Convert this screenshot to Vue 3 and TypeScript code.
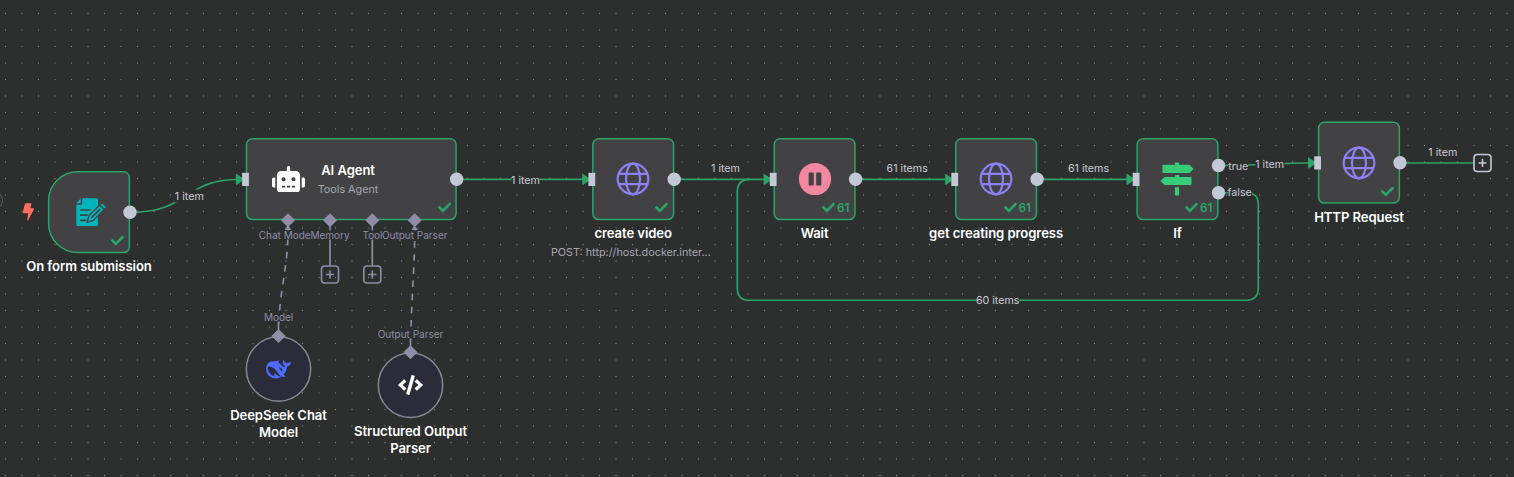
<script setup lang="ts">
type Icon = 'form' | 'robot' | 'globe' | 'pause' | 'sign' | 'whale' | 'code'

interface FlowNode {
  id: string
  x: number
  y: number
  w: number
  h: number
  kind: 'trigger' | 'agent' | 'plain' | 'round'
  icon: Icon
  name: string
  note?: string
  runs?: number
  input?: boolean
  outputs?: number[]
}

interface Label {
  text: string
  x: number
  y: number
}

const nodes: FlowNode[] = [
  { id: 'form', x: 47.8, y: 171, w: 82.4, h: 82.4, kind: 'trigger', icon: 'form', name: 'On form submission', outputs: [41.25] },
  { id: 'agent', x: 245.7, y: 138, w: 211.2, h: 82.4, kind: 'agent', icon: 'robot', name: 'AI Agent', input: true, outputs: [41.25] },
  { id: 'create', x: 592, y: 138, w: 82.4, h: 82.4, kind: 'plain', icon: 'globe', name: 'create video', note: 'POST: http://host.docker.inter...', input: true, outputs: [41.25] },
  { id: 'wait', x: 773.4, y: 138, w: 82.4, h: 82.4, kind: 'plain', icon: 'pause', name: 'Wait', runs: 61, input: true, outputs: [41.25] },
  { id: 'progress', x: 954.9, y: 138, w: 82.4, h: 82.4, kind: 'plain', icon: 'globe', name: 'get creating progress', runs: 61, input: true, outputs: [41.25] },
  { id: 'if', x: 1136.3, y: 138, w: 82.4, h: 82.4, kind: 'plain', icon: 'sign', name: 'If', runs: 61, input: true, outputs: [27.5, 54.7] },
  { id: 'http', x: 1317.8, y: 121.5, w: 82.4, h: 82.4, kind: 'plain', icon: 'globe', name: 'HTTP Request', input: true, outputs: [41.25] },
  { id: 'deepseek', x: 245.5, y: 336, w: 66, h: 66, kind: 'round', icon: 'whale', name: 'DeepSeek Chat Model' },
  { id: 'parser', x: 377.5, y: 352.3, w: 66, h: 66, kind: 'round', icon: 'code', name: 'Structured Output Parser' },
]

const edges: string[] = [
  'M130 212.3 C190 212.3 184 179.5 238 179.5',
  'M457 179.4 H586',
  'M674 179.4 H768',
  'M856 179.4 H950',
  'M1037 179.4 H1131',
  'M1219 165.6 C1262 165.6 1272 163 1312 163',
  'M1219 192.7 H1246 Q1258.3 192.7 1258.3 204 V288 Q1258.3 300.2 1246 300.2 H749 Q737.3 300.2 737.3 288 V192 Q737.3 179.4 750 179.4',
  'M1400 163 H1474',
]

const subEdges: string[] = [
  'M278.5 337 C278.5 290 288 272 288 229',
  'M410.5 353 C410.5 310 414.7 272 414.7 229',
]

const edgeLabels: Label[] = [
  { text: '1 item', x: 189.3, y: 196.2 },
  { text: '1 item', x: 525.5, y: 179.6 },
  { text: '1 item', x: 725.5, y: 168.3 },
  { text: '61 items', x: 907.2, y: 168.3 },
  { text: '61 items', x: 1088.5, y: 168.3 },
  { text: '1 item', x: 1269.7, y: 164.3 },
  { text: '60 items', x: 997.7, y: 300.3 },
  { text: '1 item', x: 1442.8, y: 152.3 },
]

const portLabels: Label[] = [
  { text: 'Chat Model', x: 285.9, y: 235 },
  { text: 'Memory', x: 330, y: 235 },
  { text: 'Tool', x: 372.5, y: 235 },
  { text: 'Output Parser', x: 414.7, y: 235 },
  { text: 'Model', x: 278.6, y: 317 },
  { text: 'Output Parser', x: 410.5, y: 334 },
]

const diamonds = [[288, 220.3], [330, 220.3], [372.3, 220.3], [414.7, 220.3], [278.5, 336], [410.5, 352.3]]

const place = (p: { x: number; y: number }) => ({ left: `${p.x}px`, top: `${p.y}px` })
const box = (n: FlowNode) => ({ left: `${n.x}px`, top: `${n.y}px`, width: `${n.w}px`, height: `${n.h}px` })

// Outline of a node, inset by half of the stroke; the left corners may be wider than the right ones.
const frame = (n: FlowNode): string => {
  const inset = 0.82
  const right = n.kind === 'round' ? 32.18 : 5.8
  const left = n.kind === 'trigger' ? 29 : right
  const x0 = n.x + inset
  const y0 = n.y + inset
  const x1 = n.x + n.w - inset
  const y1 = n.y + n.h - inset
  return `M${x0 + left} ${y0}H${x1 - right}A${right} ${right} 0 0 1 ${x1} ${y0 + right}V${y1 - right}A${right} ${right} 0 0 1 ${x1 - right} ${y1}H${x0 + left}A${left} ${left} 0 0 1 ${x0} ${y1 - left}V${y0 + left}A${left} ${left} 0 0 1 ${x0 + left} ${y0}Z`
}
</script>

<template>
  <main class="canvas">
    <svg class="layer" width="1514" height="477" viewBox="0 0 1514 477">
      <defs>
        <pattern id="dots" width="16.5" height="16.5" patternUnits="userSpaceOnUse" x="-2.75" y="5.25">
          <circle cx="8.25" cy="8.25" r="0.62" fill="#858786" />
        </pattern>
      </defs>
      <rect width="1514" height="477" fill="url(#dots)" />
      <circle cx="-6.5" cy="200.5" r="9" fill="none" stroke="#5c5e5e" />
      <path v-for="d in edges" :key="d" :d="d" class="edge" />
      <path v-for="d in subEdges" :key="d" :d="d" class="sub-edge" />
      <path d="M284.8 230 L288 225 L291.2 230Z M411.5 230 L414.7 225 L417.9 230Z" fill="#8f8da8" />
      <path d="M330 221V266 M372.3 221V266 M278.5 322V336 M410.5 338V352" class="stem" />
      <path v-for="n in nodes" :key="n.id" :d="frame(n)" class="frame" :class="{ sub: n.kind === 'round' }" />
    </svg>

    <span v-for="l in portLabels" :key="l.text + l.x" class="label port" :style="place(l)">{{ l.text }}</span>
    <span v-for="l in edgeLabels" :key="l.text + l.x" class="label" :style="place(l)">{{ l.text }}</span>
    <span class="label" :style="place({ x: 1238.3, y: 165.6 })">true</span>
    <span class="label" :style="place({ x: 1239.7, y: 192.4 })">false</span>

    <section v-for="n in nodes" :key="n.id" class="node" :class="n.kind" :style="box(n)">
      <svg v-if="n.icon === 'form'" class="icon form" width="34" height="34" viewBox="0 0 34 34">
        <path d="M8.2 3.2H22.5Q24 3.2 24 4.7V29.5Q24 31 22.5 31H3.8Q2.3 31 2.3 29.5V9.8H7Q8.2 9.8 8.2 8.6Z M6.7 3.4V8.3H2.3Z" fill="#00b4bc" />
        <path d="M6.8 15H16 M6.8 20.2H13 M6.8 25.4H12" class="form-line" />
        <path d="M14 26.4 15.5 20.9 25.7 10.9 29.4 14.5 19.3 24.6Z" fill="#00b4bc" stroke="#424244" stroke-width="2.6" />
        <path d="M14 26.4 15.5 20.9 25.7 10.9 29.4 14.5 19.3 24.6Z M26.7 9.8 28.2 8.4 31.9 12.1 30.5 13.5Z" fill="#00b4bc" />
        <path d="M17.3 22.9 26.2 14.1" stroke="#424244" stroke-width="1.6" />
      </svg>
      <svg v-else-if="n.icon === 'robot'" class="icon" width="33" height="26.4" viewBox="0 0 640 512" fill="#fff">
        <path d="M32,224H64V416H32A32,32,0,0,1,0,384V256A32,32,0,0,1,32,224Zm512-48V448a64,64,0,0,1-64,64H160a64,64,0,0,1-64-64V176a80,80,0,0,1,80-80H288V32a32,32,0,0,1,64,0V96H464A80,80,0,0,1,544,176ZM264,256a40,40,0,1,0-40,40A40,40,0,0,0,264,256Zm-8,128H192v32h64Zm96,0H288v32h64ZM456,256a40,40,0,1,0-40,40A40,40,0,0,0,456,256Zm-8,128H384v32h64ZM640,256V384a32,32,0,0,1-32,32H576V224h32A32,32,0,0,1,640,256Z" />
      </svg>
      <svg v-else-if="n.icon === 'globe'" class="icon" width="34" height="34" viewBox="-17 -17 34 34" fill="none" stroke="#8b80f6" stroke-width="2.2">
        <circle r="15.3" />
        <ellipse rx="7" ry="15.3" />
        <path d="M-14.5 -5.2H14.5 M-14.5 5.2H14.5" />
      </svg>
      <svg v-else-if="n.icon === 'pause'" class="icon" width="34" height="34" viewBox="-17 -17 34 34">
        <circle r="16.1" fill="#f2879f" />
        <rect x="-6.4" y="-6.5" width="5.2" height="13" rx="1" fill="#424244" />
        <rect x="1.2" y="-6.5" width="5.2" height="13" rx="1" fill="#424244" />
      </svg>
      <svg v-else-if="n.icon === 'sign'" class="icon" width="34" height="34" viewBox="-17 -17 34 34" fill="#37cc77">
        <path d="M-13.5 -14.2H-2.1V-15.5Q-2.1 -16.5 -1.1 -16.5H1.1Q2.1 -16.5 2.1 -15.5V-14.2H12.5L16.6 -10.1 12.5 -6.1H-13.5Q-14.5 -6.1 -14.5 -7.1V-13.2Q-14.5 -14.2 -13.5 -14.2Z" />
        <path d="M-12.5 -2H-2.1V-4.1H2.1V-2H13.5Q14.5 -2 14.5 -1V5.1Q14.5 6.1 13.5 6.1H-12.5L-16.6 2Z" />
        <path d="M-2.1 8.3H2.1V15.4Q2.1 16.4 1.1 16.4H-1.1Q-2.1 16.4 -2.1 15.4Z" />
      </svg>
      <svg v-else-if="n.icon === 'whale'" class="icon" width="25" height="25" viewBox="0 0 24 24" fill="#4d6bfe">
        <path d="M23.748 4.482c-.254-.124-.364.113-.512.234-.051.039-.094.09-.137.136-.372.397-.806.657-1.373.626-.829-.046-1.537.214-2.163.848-.133-.782-.575-1.248-1.247-1.548-.352-.156-.708-.311-.955-.65-.172-.241-.219-.51-.305-.774-.055-.16-.11-.323-.293-.35-.2-.031-.278.136-.356.276-.313.572-.434 1.202-.422 1.84.027 1.436.633 2.58 1.838 3.393.137.093.172.187.129.323-.082.28-.18.552-.266.833-.055.179-.137.217-.329.14a5.526 5.526 0 01-1.736-1.18c-.857-.828-1.631-1.742-2.597-2.458a11.365 11.365 0 00-.689-.471c-.985-.957.13-1.743.388-1.836.27-.098.093-.432-.779-.428-.872.004-1.67.295-2.687.684a3.055 3.055 0 01-.465.137 9.597 9.597 0 00-2.883-.102c-1.885.21-3.39 1.102-4.497 2.623C.082 8.606-.231 10.684.152 12.85c.403 2.284 1.569 4.175 3.36 5.653 1.858 1.533 3.997 2.284 6.438 2.14 1.482-.085 3.133-.284 4.994-1.86.47.234.962.327 1.78.397.63.059 1.236-.03 1.705-.128.735-.156.684-.837.419-.961-2.155-1.004-1.682-.595-2.113-.926 1.096-1.296 2.746-2.642 3.392-7.003.05-.347.007-.565 0-.845-.004-.17.035-.237.23-.256a4.173 4.173 0 001.545-.475c1.396-.763 1.96-2.015 2.093-3.517.02-.23-.004-.467-.247-.588zM11.581 18c-2.089-1.642-3.102-2.183-3.52-2.16-.392.024-.321.471-.235.763.09.288.207.486.371.739.114.167.192.416-.113.603-.673.416-1.842-.14-1.897-.167-1.361-.802-2.5-1.86-3.301-3.307-.774-1.393-1.224-2.887-1.298-4.482-.02-.386.093-.522.477-.592a4.696 4.696 0 011.529-.039c2.132.312 3.946 1.265 5.468 2.774.868.86 1.525 1.887 2.202 2.891.72 1.066 1.494 2.082 2.48 2.914.348.292.625.514.891.677-.802.09-2.14.11-3.054-.614zm1-6.44a.306.306 0 01.415-.287.302.302 0 01.2.288.306.306 0 01-.31.307.303.303 0 01-.304-.308zm3.11 1.596c-.2.081-.399.151-.59.16a1.245 1.245 0 01-.798-.254c-.274-.23-.47-.358-.552-.758a1.73 1.73 0 01.016-.588c.07-.327-.008-.537-.239-.727-.187-.156-.426-.199-.688-.199a.559.559 0 01-.254-.078c-.11-.054-.2-.19-.114-.358.028-.054.16-.186.192-.21.356-.202.767-.136 1.146.016.352.144.618.408 1.001.782.391.451.462.576.685.914.176.265.336.537.445.848.067.195-.019.354-.25.452z" />
      </svg>
      <svg v-else class="icon" width="25" height="20" viewBox="0 0 640 512" fill="#fff">
        <path d="M278.9 511.5l-61-17.7c-6.4-1.8-10-8.5-8.2-14.9L346.2 8.7c1.8-6.4 8.5-10 14.9-8.2l61 17.7c6.4 1.8 10 8.5 8.2 14.9L293.8 503.3c-1.9 6.4-8.5 10.1-14.9 8.2zm-114-112.2l43.5-46.4c4.6-4.9 4.3-12.7-.8-17.2L117 256l90.6-79.7c5.1-4.5 5.5-12.3.8-17.2l-43.5-46.4c-4.5-4.8-12.1-5.1-17-.5L3.8 247.2c-5.1 4.7-5.1 12.8 0 17.5l144.1 135.1c4.9 4.6 12.5 4.4 17-.5zm327.2.6l144.1-135.1c5.1-4.7 5.1-12.8 0-17.5L492.1 112.1c-4.8-4.5-12.4-4.3-17 .5L431.6 159c-4.6 4.9-4.3 12.7.8 17.2L523 256l-90.6 79.7c-5.1 4.5-5.5 12.3-.8 17.2l43.5 46.4c4.5 4.9 12.1 5.1 17 .6z" />
      </svg>

      <div v-if="n.kind === 'agent'" class="inner">
        <strong>{{ n.name }}</strong>
        <small>Tools Agent</small>
      </div>
      <div v-else class="caption">
        <strong>{{ n.name }}</strong>
        <small v-if="n.note" class="note">{{ n.note }}</small>
      </div>

      <div v-if="n.kind !== 'round'" class="status">
        <svg width="13" height="13" viewBox="0 0 512 512" fill="currentColor">
          <path d="M173.9 439.4l-166.4-166.4c-10-10-10-26.2 0-36.2l36.2-36.2c10-10 26.2-10 36.2 0L192 312.7 432.1 72.6c10-10 26.2-10 36.2 0l36.2 36.2c10 10 10 26.2 0 36.2l-294.4 294.4c-10 10-26.2 10-36.2 0z" />
        </svg>
        <span v-if="n.runs">{{ n.runs }}</span>
      </div>
    </section>

    <svg class="layer" width="1514" height="477" viewBox="0 0 1514 477">
      <path d="M25.8 203.3H30.9Q31.6 203.3 31.4 204L30.4 208.3H33.5Q34.3 208.4 33.9 209.2L28.2 220.3Q27.2 221 27.3 219.9L28.2 213.2H23.4Q22.6 213.1 22.7 212.4L24.9 203.9Q25.1 203.3 25.8 203.3Z" fill="#ff6f5c" />
      <template v-for="n in nodes" :key="n.id">
        <g v-if="n.input" :transform="`translate(${n.x} ${n.y + 41.4})`">
          <path d="M-9.8 -5.2 Q-9.8 -6 -9 -5.5 L-2 -0.6 V0.6 L-9 5.5 Q-9.8 6 -9.8 5.2Z" fill="#2aa467" />
          <rect x="-3.6" y="-6.6" width="6.8" height="13.2" fill="#c3c8d6" />
        </g>
        <circle v-for="o in n.outputs" :key="o" :cx="n.x + n.w - 0.2" :cy="n.y + o" r="6.7" fill="#c3c8d6" />
      </template>
      <rect v-for="d in diamonds" :key="d.join()" x="-5" y="-5" width="10" height="10" :transform="`translate(${d[0]} ${d[1]}) rotate(45)`" fill="#8f8da8" />
      <g class="plus muted">
        <rect x="321.5" y="266" width="17" height="17" rx="3.3" />
        <path d="M326 274.5H334 M330 270.5V278.5" />
        <rect x="363.8" y="266" width="17" height="17" rx="3.3" />
        <path d="M368.3 274.5H376.3 M372.3 270.5V278.5" />
      </g>
      <g class="plus">
        <rect x="1474" y="154.5" width="17" height="17" rx="3.3" />
        <path d="M1478.5 163H1486.5 M1482.5 159V167" />
      </g>
    </svg>
  </main>
</template>

<style>
html,
body {
  margin: 0;
  background: #2d2e2e;
}
</style>

<style scoped>
.canvas {
  position: relative;
  width: 1514px;
  height: 477px;
  overflow: hidden;
  background: #2d2e2e;
  color: #fff;
  font-family: Inter, 'Liberation Sans', sans-serif;
}
.layer {
  position: absolute;
  inset: 0;
  pointer-events: none;
}
.edge {
  fill: none;
  stroke: #2aa467;
  stroke-width: 1.65;
}
.sub-edge {
  fill: none;
  stroke: #8f8da8;
  stroke-width: 1.65;
  stroke-dasharray: 6.6 6.6;
}
.stem {
  stroke: #8f8da8;
  stroke-width: 1.65;
}
.frame {
  fill: #424244;
  stroke: #2aa467;
  stroke-width: 1.5;
}
.frame.sub {
  fill: #2b2b3a;
  stroke: #88888e;
}
.form-line {
  stroke: #424244;
  stroke-width: 1.7;
  stroke-linecap: round;
}
.label {
  position: absolute;
  transform: translate(-50%, -50%);
  background: #2d2e2e;
  color: #c9ccd6;
  font-size: 10.7px;
  line-height: 13px;
  white-space: nowrap;
}
.label.port {
  color: #8f8da8;
  font-size: 10px;
  line-height: 9px;
}
.node {
  position: absolute;
  box-sizing: border-box;
  display: flex;
  align-items: center;
  justify-content: center;
}
.agent {
  justify-content: flex-start;
  gap: 13px;
  padding-left: 26px;
}
.icon {
  flex: none;
}
.icon.form {
  margin-left: 3.4px;
}
.inner {
  display: flex;
  flex-direction: column;
  align-items: center;
  gap: 3px;
  padding-top: 2px;
}
strong {
  font-size: 13.1px;
  font-weight: 600;
  line-height: 16.5px;
  letter-spacing: -0.08px;
}
small {
  color: #a5a6b0;
  font-size: 10.8px;
  line-height: 16px;
  white-space: nowrap;
}
.caption {
  position: absolute;
  top: calc(100% + 5px);
  left: 50%;
  width: 170px;
  transform: translateX(-50%);
  display: flex;
  flex-direction: column;
  align-items: center;
  gap: 3px;
  text-align: center;
}
.note {
  margin-left: -4.6px;
}
.round .caption {
  top: calc(100% + 5.1px);
  width: 132px;
}
.status {
  position: absolute;
  right: 6.2px;
  bottom: 5.2px;
  display: flex;
  align-items: center;
  gap: 2px;
  height: 15px;
  color: #2aa467;
  font-size: 11.8px;
  font-weight: 600;
}
.plus {
  fill: none;
  stroke: #c3c8d6;
  stroke-width: 1.6;
}
.plus.muted {
  stroke: #8f8da8;
}
</style>
